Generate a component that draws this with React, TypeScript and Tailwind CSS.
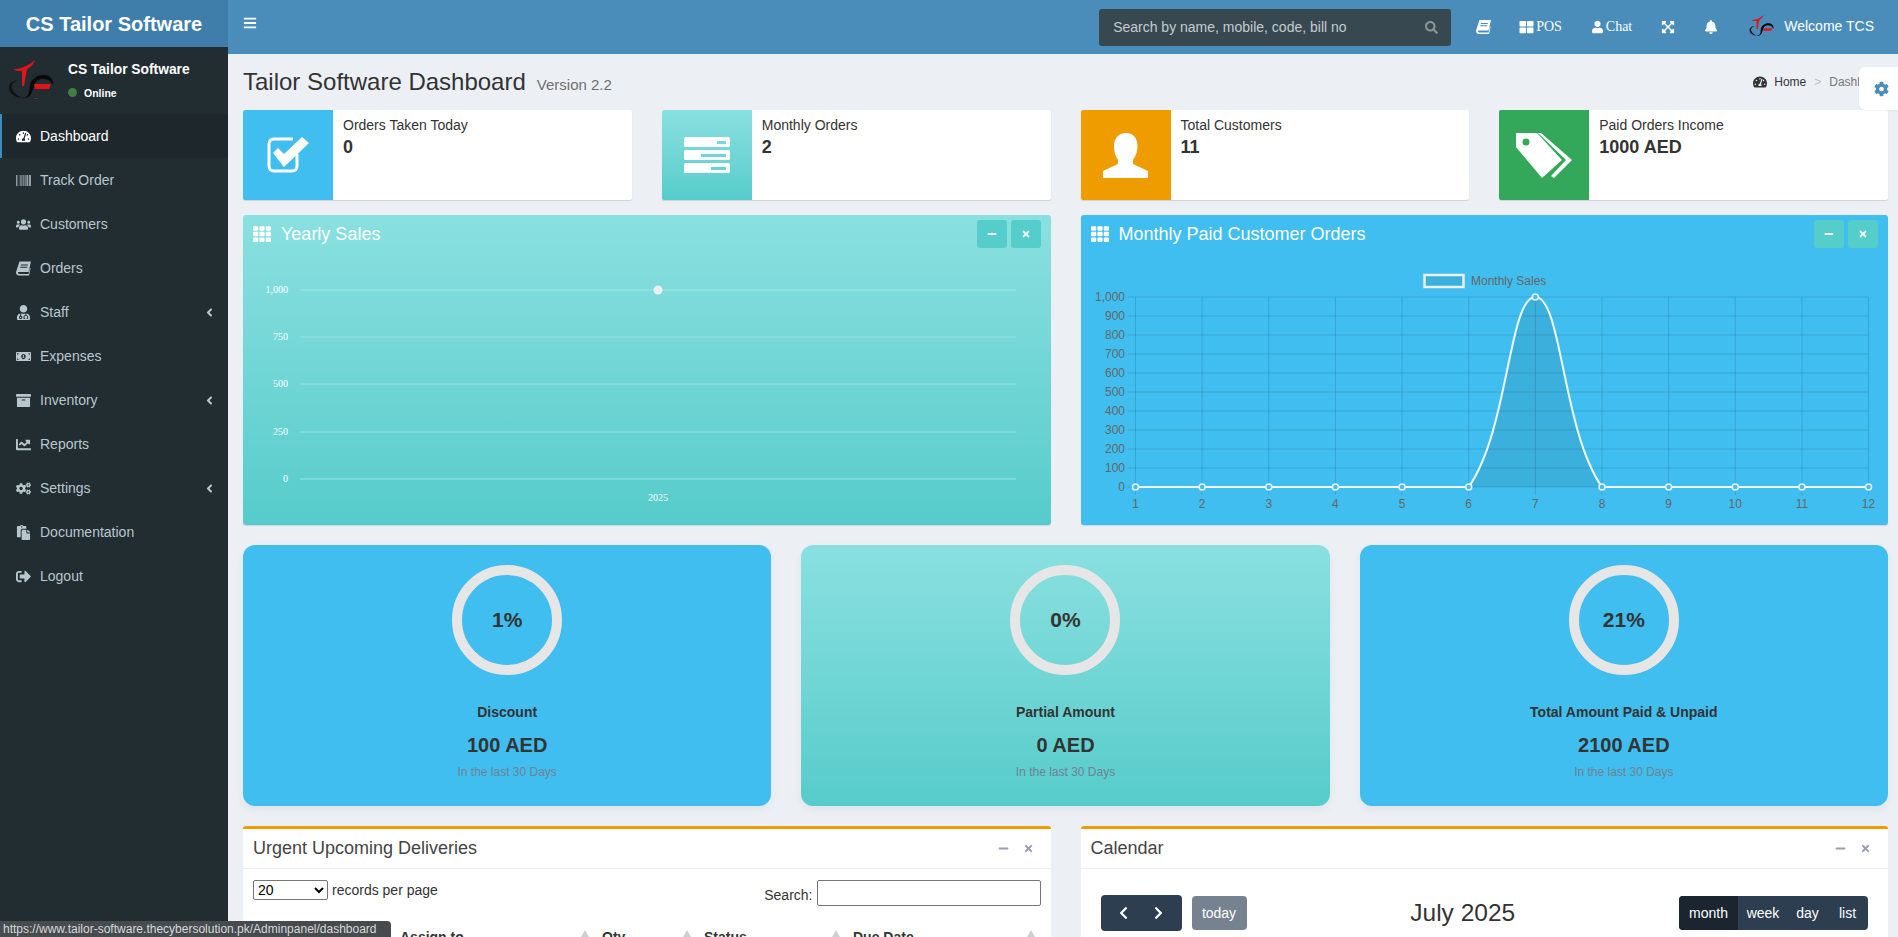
import React from "react";
import {
  FaBars, FaTachometerAlt, FaBarcode, FaUsers, FaUserMd, FaMoneyBillAlt, FaArchive,
  FaChartLine, FaCogs, FaPaste, FaSignOutAlt, FaAngleLeft, FaSearch, FaUser, FaExpandArrowsAlt,
  FaBell, FaThLarge, FaTh, FaMinus, FaTimes, FaCog, FaChevronLeft, FaChevronRight,
} from "react-icons/fa";

function Logo({ className }: { className: string }) {
  return (
    <svg viewBox="0 0 46 42" className={className}>
      <path d="M5 9 C12 9 17 8 27 0 C25 5 23 7 19 9 L16 26 L14 26 L14 11 C10 11 8 11 5 9Z" fill="#e3131b" />
      <path d="M1 28 C1 23 6 20 10 20 C5 22 3 25 4 29 C5 33 10 36 14 38 C9 38 1 34 1 28Z" fill="#111" />
      <path d="M14 38 C22 38 21 30 22 25 C23 20 28 15 36 15 C42 15 46 20 45 25 C42 20 38 18 33 19 C26 20 26 27 24 32 C22 37 18 39 14 38Z" fill="#0a0a0a" />
      <path d="M26 24 H43 L41 29 H27Z" fill="#e3131b" />
      <path d="M26 38 H31 L28 39Z" fill="#e3131b" />
    </svg>
  );
}

function BookIcon({ className, lines }: { className?: string; lines?: string }) {
  return (
    <svg viewBox="0 0 15 14" className={className} fill="currentColor">
      <path d="M3.5 0 H15 L12.6 10.5 H3.2 C2.2 10.5 1.8 11 2 11.6 C2.2 12.2 2.8 12.5 3.4 12.5 H12.5 L14 6.5 L14.6 7 L13 14 H3 C1.4 14 0.1 12.8 0 11.2 C0 10.8 0.1 10.4 0.2 10Z" />
      <path d="M5 3 H12 L11.7 4 H4.7Z M4.4 5.2 H11.4 L11.1 6.2 H4.1Z" fill={lines ?? "#222d32"} />
    </svg>
  );
}

const menu: [React.ComponentType<{ className?: string }>, string, boolean][] = [
  [FaBarcode, "Track Order", false],
  [FaUsers, "Customers", false],
  [BookIcon, "Orders", false],
  [FaUserMd, "Staff", true],
  [FaMoneyBillAlt, "Expenses", false],
  [FaArchive, "Inventory", true],
  [FaChartLine, "Reports", false],
  [FaCogs, "Settings", true],
  [FaPaste, "Documentation", false],
  [FaSignOutAlt, "Logout", false],
];

function Sidebar() {
  return (
    <aside className="w-[228px] shrink-0 bg-[#222d32] flex flex-col">
      <div className="h-[47px] bg-[#3f7eaa] flex items-center justify-center text-white font-bold text-[20px]">
        CS Tailor Software
      </div>
      <div className="h-[67px] flex items-center pl-[8px]">
        <Logo className="w-[46px] h-[42px]" />
        <div className="ml-[14px] text-white">
          <div className="font-bold text-[13.8px] leading-[16px]">CS Tailor Software</div>
          <div className="flex items-center mt-[8px] text-[10.5px] font-bold leading-[14px]">
            <span className="w-[9px] h-[9px] rounded-full bg-[#3f7f3f] mr-[7px]" />
            Online
          </div>
        </div>
      </div>
      <nav className="text-[14px] text-[#b8c7ce]">
        <div className="h-[44px] flex items-center pl-[14px] border-l-2 border-[#3c8dbc] bg-[#1e282c] text-white">
          <FaTachometerAlt className="w-[15px] h-[15px]" />
          <span className="ml-[9px]">Dashboard</span>
        </div>
        {menu.map(([Icon, label, caret]) => (
          <div key={label} className="h-[44px] flex items-center pl-[16px] pr-[12px]">
            <Icon className="w-[15px] h-[15px]" />
            <span className="ml-[9px]">{label}</span>
            {caret && <FaAngleLeft className="ml-auto w-[13px] h-[13px]" />}
          </div>
        ))}
      </nav>
    </aside>
  );
}

function Header() {
  return (
    <header className="h-[54px] shrink-0 bg-[#4a8dbb] flex items-center pl-[15px] text-white text-[14px]">
      <FaBars className="w-[14px] h-[14px] -mt-[9px]" />
      <div className="ml-auto w-[352px] h-[37px] rounded-[3px] bg-[#374850] flex items-center pl-[14px] pr-[13px] text-[#c5ccd0]">
        <span>Search by name, mobile, code, bill no</span>
        <FaSearch className="ml-auto w-[13px] h-[13px] text-[#8b9599]" />
      </div>
      <div className="flex items-center ml-[25px] mt-[-1px]">
        <BookIcon className="w-[15px] h-[14px]" lines="#4a8dbb" />
        <div className="flex items-center ml-[28px] font-['Liberation_Serif',serif]">
          <FaThLarge className="w-[15px] h-[14px] mr-[2px]" />
          POS
        </div>
        <div className="flex items-center ml-[30px] font-['Liberation_Serif',serif]">
          <FaUser className="w-[11px] h-[14px] mr-[3px]" />
          Chat
        </div>
        <FaExpandArrowsAlt className="w-[14px] h-[14px] ml-[29px]" />
        <FaBell className="w-[14px] h-[14px] ml-[29px]" />
        <Logo className="w-[25px] h-[23px] ml-[31px]" />
        <span className="ml-[10px] mr-[24px] text-[14px]">Welcome TCS</span>
      </div>
    </header>
  );
}

function CheckIcon() {
  return (
    <svg viewBox="0 0 42 36" className="w-[42px] h-[36px]" fill="none">
      <path d="M30 17 V29 C30 32 28 34 25 34 H7 C4 34 2 32 2 29 V7 C2 4 4 2 7 2 H26" stroke="#fff" strokeWidth="3" />
      <path d="M6 16 L11 11 L17 17 L35 0 L42 6 L17 30Z" fill="#fff" />
    </svg>
  );
}
function ServerIcon() {
  return (
    <svg viewBox="0 0 46 36" className="w-[46px] h-[36px]">
      <rect x="0" y="0" width="46" height="10" rx="1.5" fill="#fff" />
      <rect x="0" y="13" width="46" height="10" rx="1.5" fill="#fff" />
      <rect x="0" y="26" width="46" height="10" rx="1.5" fill="#fff" />
      <rect x="33" y="4" width="9" height="3" fill="#7bdad9" />
      <rect x="17" y="17" width="25" height="3" fill="#6fd6d5" />
      <rect x="27" y="30" width="15" height="3" fill="#66d3d2" />
    </svg>
  );
}
function PersonIcon() {
  return (
    <svg viewBox="0 0 45 45" className="w-[45px] h-[45px]" fill="#fff">
      <path d="M23 0 C31 0 34.5 6 34.5 13 C34.5 20 32 24 30 27 V31 L45 38 V45 H0 V38 L15 31 V27 C13 24 11 20 11 13 C11 6 15 0 23 0Z" />
    </svg>
  );
}
function TagIcon() {
  return (
    <svg viewBox="0 0 56 45" className="w-[56px] h-[45px]">
      <path d="M0 0 H21 L46 27 L26 45 L0 14Z" fill="#fff" />
      <circle cx="10" cy="9" r="3.5" fill="#33a85a" />
      <path d="M25 0 L56 27 L38 45 L35 43 L50 27 L22 0Z" fill="#fff" />
    </svg>
  );
}

function InfoBox({ icon, bg, label, value }: { icon: React.ReactNode; bg: string; label: string; value: string }) {
  return (
    <div className="h-[90px] bg-white rounded-[2px] shadow-[0_1px_1px_rgba(0,0,0,0.12)] flex overflow-hidden">
      <div className={`w-[90px] flex items-center justify-center ${bg}`}>{icon}</div>
      <div className="pl-[10px] pt-[5px]">
        <div className="text-[14px] leading-[20px] text-[#333]">{label}</div>
        <div className="text-[18px] font-bold leading-[22px] mt-[1px] text-[#333]">{value}</div>
      </div>
    </div>
  );
}

function MiniButtons() {
  return (
    <div className="flex gap-[4px]">
      {[FaMinus, FaTimes].map((I, i) => (
        <div key={i} className="w-[30px] h-[28px] rounded-[3px] bg-[#55cdcb] flex items-center justify-center text-white">
          <I className="w-[10px] h-[10px]" />
        </div>
      ))}
    </div>
  );
}

function ChartCard({ title, bg, children }: { title: string; bg: string; children: React.ReactNode }) {
  return (
    <div className={`h-[310px] rounded-[3px] shadow-[0_1px_1px_rgba(0,0,0,0.12)] ${bg}`}>
      <div className="h-[50px] flex items-start pl-[10px] pr-[10px] pt-[5px] text-white text-[18px]">
        <div className="flex items-center h-[28px]">
          <FaTh className="w-[18px] h-[18px]" />
          <span className="ml-[10px]">{title}</span>
        </div>
        <div className="ml-auto"><MiniButtons /></div>
      </div>
      {children}
    </div>
  );
}

function YearlyChart() {
  const rows: [number, string][] = [[25, "1,000"], [72, "750"], [119, "500"], [167, "250"], [214, "0"]];
  return (
    <svg width="808" height="260" className="block" fontFamily="'Liberation Serif', serif" fontSize="10" fill="#fff">
      {rows.map(([y, t], i) => (
        <g key={t}>
          <line x1="57" x2="773" y1={y} y2={y} stroke="#a5e6e6" strokeOpacity={i === 0 || i === 4 ? 0.45 : 0.8} strokeWidth={i === 0 || i === 4 ? 2 : 1} />
          <text x="45" y={y + 3} textAnchor="end">{t}</text>
        </g>
      ))}
      <circle cx="415" cy="25" r="4.5" fill="#eeeeee" />
      <text x="415" y="236" textAnchor="middle">2025</text>
    </svg>
  );
}

function MonthlyChart() {
  const x0 = 54.5, step = 66.64, top = 32, bot = 222;
  const X = (i: number) => x0 + i * step;
  const Y = [0, 100, 200, 300, 400, 500, 600, 700, 800, 900, 1000];
  const x6 = X(5), x7 = X(6), x8 = X(7);
  const hump = `M${x6} ${bot} C${x6 + 40} ${bot - 57} ${x7 - 26.6} ${top} ${x7} ${top} C${x7 + 26.6} ${top} ${x8 - 40} ${bot - 57} ${x8} ${bot}`;
  return (
    <svg width="808" height="260" className="block" fontFamily="'Liberation Sans', sans-serif" fontSize="12" fill="#666">
      <rect x="343.5" y="10" width="39" height="12" fill="#3bb0dc" stroke="#eeeeee" strokeWidth="2.5" />
      <text x="390" y="20">Monthly Sales</text>
      <path d={`${hump} Z`} fill="#3bb0dc" />
      {Y.map((v, i) => {
        const y = bot - i * 19;
        return (
          <g key={v}>
            <line x1="46.5" x2={X(11)} y1={y} y2={y} stroke="#000" strokeOpacity="0.13" />
            <text x="44" y={y + 4} textAnchor="end">{v.toLocaleString("en-US")}</text>
          </g>
        );
      })}
      {Array.from({ length: 12 }, (_, i) => (
        <g key={i}>
          <line x1={X(i)} x2={X(i)} y1={top} y2={bot + 8} stroke="#000" strokeOpacity="0.13" />
          <text x={X(i)} y={bot + 21} textAnchor="middle">{i + 1}</text>
        </g>
      ))}
      <g fill="none" stroke="#f0f6f8" strokeWidth="2">
        <line x1={X(0)} x2={x6} y1={bot} y2={bot} />
        <path d={hump} />
        <line x1={x8} x2={X(11)} y1={bot} y2={bot} />
      </g>
      {Array.from({ length: 12 }, (_, i) => (
        <circle key={i} cx={X(i)} cy={i === 6 ? top : bot} r="3" fill="#40bef0" stroke="#eeeeee" strokeWidth="1.5" />
      ))}
    </svg>
  );
}

function StatCard({ bg, pct, title, value }: { bg: string; pct: string; title: string; value: string }) {
  return (
    <div className={`h-[261px] rounded-[12px] shadow-[0_4px_10px_rgba(0,0,0,0.05)] flex flex-col items-center pt-[20px] text-[#333] ${bg}`}>
      <div className="w-[110px] h-[110px] rounded-full border-[10px] border-[#e6e6e6] flex items-center justify-center text-[21px] font-bold">
        {pct}
      </div>
      <div className="mt-[29px] text-[14px] font-bold leading-[16px]">{title}</div>
      <div className="mt-[13px] text-[20px] font-bold leading-[24px]">{value}</div>
      <div className="mt-[8px] text-[12px] leading-[14px] text-[#6f8291]">In the last 30 Days</div>
    </div>
  );
}

function PanelHead({ title }: { title: string }) {
  return (
    <div className="h-[40px] border-b border-[#f0f0f0] flex items-center pl-[10px] pr-[17px] text-[18px] text-[#444]">
      <span>{title}</span>
      <FaMinus className="ml-auto w-[11px] h-[11px] text-[#97a0b3]" />
      <FaTimes className="ml-[14px] w-[11px] h-[11px] text-[#97a0b3]" />
    </div>
  );
}

function Th({ label, className }: { label: string; className: string }) {
  return (
    <div className={`flex justify-between pl-[10px] pr-[3px] ${className}`}>
      <span>{label}</span>
      <span className="w-0 h-0 mt-[3px] border-x-[4px] border-x-transparent border-b-[7px] border-b-[#d0d0d0]" />
    </div>
  );
}

function Deliveries() {
  return (
    <div className="h-[200px] bg-white rounded-[3px] border-t-[3px] border-[#ef9c00]">
      <PanelHead title="Urgent Upcoming Deliveries" />
      <div className="flex justify-between pl-[10px] pr-[10px] pt-[11px] text-[14px] text-[#333]">
        <div className="flex items-start">
          <select defaultValue="20" className="w-[75px] h-[20px] bg-white border border-[#767676] rounded-[2px] text-[14px] text-black">
            <option value="20">20</option>
          </select>
          <span className="ml-[4px] leading-[20px]">records per page</span>
        </div>
        <div className="flex items-start">
          <span className="leading-[30px] mr-[4px]">Search:</span>
          <input className="w-[224px] h-[26px] border border-[#767676] rounded-[2px] bg-white" />
        </div>
      </div>
      <div className="flex ml-[147px] mt-[17px] text-[14px] font-bold text-[#333] leading-[20px]">
        <Th label="Assign to" className="w-[202px]" />
        <Th label="Qty" className="w-[102px]" />
        <Th label="Status" className="w-[149px]" />
        <Th label="Due Date" className="w-[195px]" />
      </div>
    </div>
  );
}

function Calendar() {
  return (
    <div className="h-[200px] bg-white rounded-[3px] border-t-[3px] border-[#ef9c00]">
      <PanelHead title="Calendar" />
      <div className="flex items-center justify-between px-[20px] pt-[26px] text-[14px] text-white">
        <div className="flex items-center">
          <div className="w-[81px] h-[36px] rounded-[4px] bg-[#2c3e50] flex items-center justify-around px-[6px]">
            <FaChevronLeft className="w-[11px] h-[14px]" />
            <FaChevronRight className="w-[11px] h-[14px]" />
          </div>
          <div className="ml-[10px] w-[55px] h-[34px] rounded-[4px] bg-[#76828f] flex items-center justify-center">today</div>
        </div>
        <div className="text-[24.5px] text-[#333]">July 2025</div>
        <div className="flex h-[34px] rounded-[4px] overflow-hidden bg-[#2c3e50]">
          <div className="w-[59px] bg-[#1a252f] flex items-center justify-center">month</div>
          <div className="w-[50px] flex items-center justify-center">week</div>
          <div className="w-[39px] flex items-center justify-center">day</div>
          <div className="w-[41px] flex items-center justify-center">list</div>
        </div>
      </div>
    </div>
  );
}

export default function App() {
  const teal = "bg-linear-to-b from-[#8ae0e0] to-[#55cccb]";
  const blue = "bg-[#40bef0]";
  return (
    <div className="relative h-screen overflow-hidden flex bg-[#ecf0f5] font-['Liberation_Sans',Arial,sans-serif]">
      <Sidebar />
      <main className="flex-1 min-w-0 flex flex-col">
        <Header />
        <div className="shrink-0 pl-[15px] pr-[10px]">
          <div className="h-[56px] flex items-center justify-between text-[#333]">
            <div className="flex items-baseline">
              <h1 className="text-[24px]">Tailor Software Dashboard</h1>
              <span className="ml-[11px] text-[15px] text-[#6f6f6f]">Version 2.2</span>
            </div>
            <div className="flex items-center text-[12px]">
              <FaTachometerAlt className="w-[14px] h-[14px] mr-[7px]" />
              <span>Home</span>
              <span className="mx-[8px] text-[#bbb]">&gt;</span>
              <span className="text-[#777]">Dashboard</span>
            </div>
          </div>
          <div className="grid grid-cols-4 gap-[30px] mb-[15px]">
            <InfoBox icon={<CheckIcon />} bg="bg-[#40bef0]" label="Orders Taken Today" value="0" />
            <InfoBox icon={<ServerIcon />} bg={teal} label="Monthly Orders" value="2" />
            <InfoBox icon={<PersonIcon />} bg="bg-[#ef9c00]" label="Total Customers" value="11" />
            <InfoBox icon={<TagIcon />} bg="bg-[#33a85a]" label="Paid Orders Income" value="1000 AED" />
          </div>
          <div className="grid grid-cols-2 gap-[30px] mb-[20px]">
            <ChartCard title="Yearly Sales" bg={teal}><YearlyChart /></ChartCard>
            <ChartCard title="Monthly Paid Customer Orders" bg={blue}><MonthlyChart /></ChartCard>
          </div>
          <div className="grid grid-cols-3 gap-[30px] mb-[20px]">
            <StatCard bg={blue} pct="1%" title="Discount" value="100 AED" />
            <StatCard bg={teal} pct="0%" title="Partial Amount" value="0 AED" />
            <StatCard bg={blue} pct="21%" title="Total Amount Paid & Unpaid" value="2100 AED" />
          </div>
          <div className="grid grid-cols-2 gap-[30px]">
            <Deliveries />
            <Calendar />
          </div>
        </div>
      </main>
      <div className="absolute right-0 top-[67px] w-[39px] h-[43px] bg-white rounded-l-[6px] flex items-center justify-center pl-[6px] shadow-[0_1px_2px_rgba(0,0,0,0.05)]">
        <FaCog className="w-[15px] h-[16px] text-[#4a8dbb]" />
      </div>
      <div className="absolute left-0 bottom-0 h-[16px] w-[391px] pl-[3px] bg-[#474b4e] rounded-tr-[4px] text-[12px] leading-[17px] text-[#d5d9dc] overflow-hidden whitespace-nowrap">
        https://www.tailor-software.thecybersolution.pk/Adminpanel/dashboard
      </div>
    </div>
  );
}
